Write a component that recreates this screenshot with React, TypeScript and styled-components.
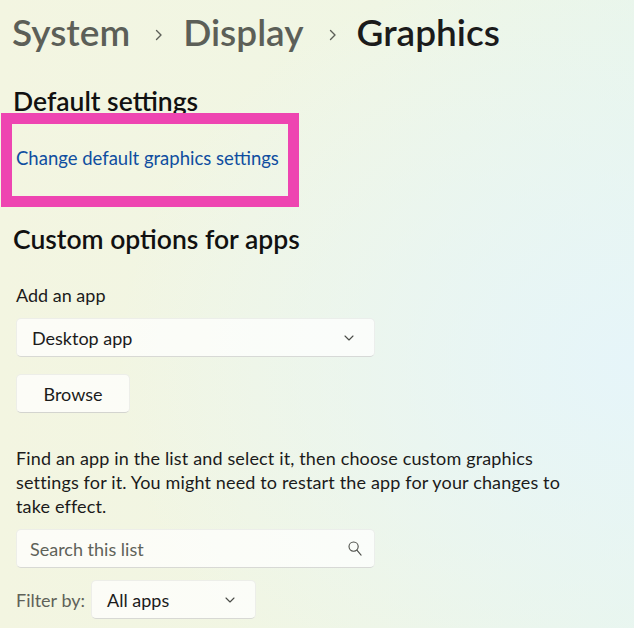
import React from 'react';
import styled, { createGlobalStyle } from 'styled-components';

// ── Data ──────────────────────────────────────────────────────────────────────

const CRUMBS = [
  { label: 'System', current: false },
  { label: 'Display', current: false },
  { label: 'Graphics', current: true },
];

const FONT = `'Lato', 'Noto Sans', 'Liberation Sans', sans-serif`;

// ── Icons ─────────────────────────────────────────────────────────────────────

function ChevronDown() {
  return (
    <svg width="10" height="6" viewBox="0 0 10 6" fill="none">
      <path d="M1 1l4 4 4-4" stroke="#4a4c47" strokeWidth="1.1" strokeLinecap="round" strokeLinejoin="round" />
    </svg>
  );
}

function SearchIcon() {
  return (
    <svg width="14" height="15" viewBox="0 0 14 15" fill="none">
      <circle cx="5.6" cy="5.6" r="4.6" stroke="#4a4c47" strokeWidth="1.1" />
      <path d="M8.9 9.2l4.2 4.9" stroke="#4a4c47" strokeWidth="1.1" strokeLinecap="round" />
    </svg>
  );
}

function CrumbChevron() {
  return (
    <svg width="8" height="12" viewBox="0 0 8 12" fill="none">
      <path d="M1.5 1.5l4.5 4.5-4.5 4.5" stroke="#5c5f58" strokeWidth="1.4" strokeLinecap="round" strokeLinejoin="round" />
    </svg>
  );
}

// ── Component ─────────────────────────────────────────────────────────────────

export default function App() {
  return (
    <>
      <GlobalStyle />
      <Page>
        <Breadcrumb>
          {CRUMBS.map((c, i) => (
            <React.Fragment key={c.label}>
              {i > 0 && (
                <CrumbSep>
                  <CrumbChevron />
                </CrumbSep>
              )}
              <Crumb $current={c.current}>{c.label}</Crumb>
            </React.Fragment>
          ))}
        </Breadcrumb>

        <SectionTitle $top={29}>Default settings</SectionTitle>

        {/* Highlight frame drawn over the link row */}
        <HighlightFrame>
          <SettingsLink href="#">Change default graphics settings</SettingsLink>
        </HighlightFrame>

        <SectionTitle $top={16}>Custom options for apps</SectionTitle>

        <FieldLabel>Add an app</FieldLabel>
        <Select $width={359} $top={11}>
          <span>Desktop app</span>
          <IconSlot>
            <ChevronDown />
          </IconSlot>
        </Select>

        <Button>Browse</Button>

        <Paragraph>
          Find an app in the list and select it, then choose custom graphics settings for it. You
          might need to restart the app for your changes to take effect.
        </Paragraph>

        <SearchBox>
          <Placeholder>Search this list</Placeholder>
          <IconSlot>
            <SearchIcon />
          </IconSlot>
        </SearchBox>

        <FilterRow>
          <FilterLabel>Filter by:</FilterLabel>
          <Select $width={165} $top={0}>
            <span>All apps</span>
            <IconSlot>
              <ChevronDown />
            </IconSlot>
          </Select>
        </FilterRow>
      </Page>
    </>
  );
}

// ── Styled components ─────────────────────────────────────────────────────────

const GlobalStyle = createGlobalStyle`
  html, body {
    margin: 0;
    padding: 0;
  }
  body {
    font-family: ${FONT};
    color: #1b1b1b;
  }
  * {
    box-sizing: border-box;
  }
`;

const Page = styled.main`
  width: 634px;
  height: 628px;
  overflow: hidden;
  padding: 8px 0 0 16px;
  display: flex;
  flex-direction: column;
  align-items: flex-start;
  background:
    radial-gradient(ellipse 520px 420px at 100% 58%, rgba(230, 245, 249, 1) 0%, rgba(230, 245, 249, 0) 100%),
    linear-gradient(90deg, #f3f5e1 0%, #f0f6e4 60%, #eaf6ea 100%);
`;

/* ── Breadcrumb ── */
const Breadcrumb = styled.nav`
  display: flex;
  align-items: center;
  height: 48px;
  margin-left: -4px;
`;

const Crumb = styled.span<{ $current: boolean }>`
  font-size: 37px;
  line-height: 48px;
  font-weight: 600;
  color: ${(p) => (p.$current ? '#1b1b1b' : '#5c5f58')};
`;

const CrumbSep = styled.span`
  display: flex;
  align-items: center;
  padding: 6px 20px 0 25px;
`;

/* ── Sections ── */
const SectionTitle = styled.h2<{ $top: number }>`
  margin: ${(p) => p.$top}px 0 0 -3px;
  font-size: 26.5px;
  line-height: 32px;
  font-weight: 600;
  color: #111;
`;

const HighlightFrame = styled.div`
  position: relative;
  z-index: 1;
  margin: -4px 0 0 -15px;
  width: 298px;
  height: 94px;
  border: 11px solid #ee45b1;
  padding: 22px 0 0 4px;
`;

const SettingsLink = styled.a`
  font-size: 18.5px;
  line-height: 24px;
  white-space: nowrap;
  color: #0f4ea0;
  text-decoration: none;
`;

const FieldLabel = styled.div`
  margin-top: 28px;
  font-size: 18px;
  line-height: 24px;
  color: #1b1b1b;
`;

const Select = styled.div<{ $width: number; $top: number }>`
  margin-top: ${(p) => p.$top}px;
  width: ${(p) => p.$width}px;
  height: 39px;
  display: flex;
  align-items: center;
  justify-content: space-between;
  padding: 0 20px 0 15px;
  background: rgba(255, 255, 255, 0.72);
  border: 1px solid rgba(0, 0, 0, 0.06);
  border-bottom-color: rgba(0, 0, 0, 0.14);
  border-radius: 5px;
  font-size: 18px;
  color: #1b1b1b;
`;

const IconSlot = styled.span`
  display: flex;
  align-items: center;
`;

const Button = styled.button`
  margin-top: 17px;
  width: 114px;
  height: 39px;
  background: rgba(255, 255, 255, 0.72);
  border: 1px solid rgba(0, 0, 0, 0.06);
  border-bottom-color: rgba(0, 0, 0, 0.16);
  border-radius: 5px;
  font-family: ${FONT};
  font-size: 18px;
  color: #1b1b1b;
  padding: 0;
`;

const Paragraph = styled.p`
  margin: 33px 0 0 0;
  width: 570px;
  font-size: 18px;
  letter-spacing: 0.15px;
  line-height: 24px;
  color: #1b1b1b;
`;

const SearchBox = styled.div`
  margin-top: 11px;
  width: 359px;
  height: 39px;
  display: flex;
  align-items: center;
  justify-content: space-between;
  padding: 0 12px 0 13px;
  background: rgba(255, 255, 255, 0.72);
  border: 1px solid rgba(0, 0, 0, 0.06);
  border-bottom-color: rgba(0, 0, 0, 0.14);
  border-radius: 5px;
`;

const Placeholder = styled.span`
  font-size: 18px;
  color: #5f6259;
`;

const FilterRow = styled.div`
  margin-top: 12px;
  display: flex;
  align-items: center;
  gap: 6px;
`;

const FilterLabel = styled.span`
  font-size: 18px;
  color: #5f6259;
`;
